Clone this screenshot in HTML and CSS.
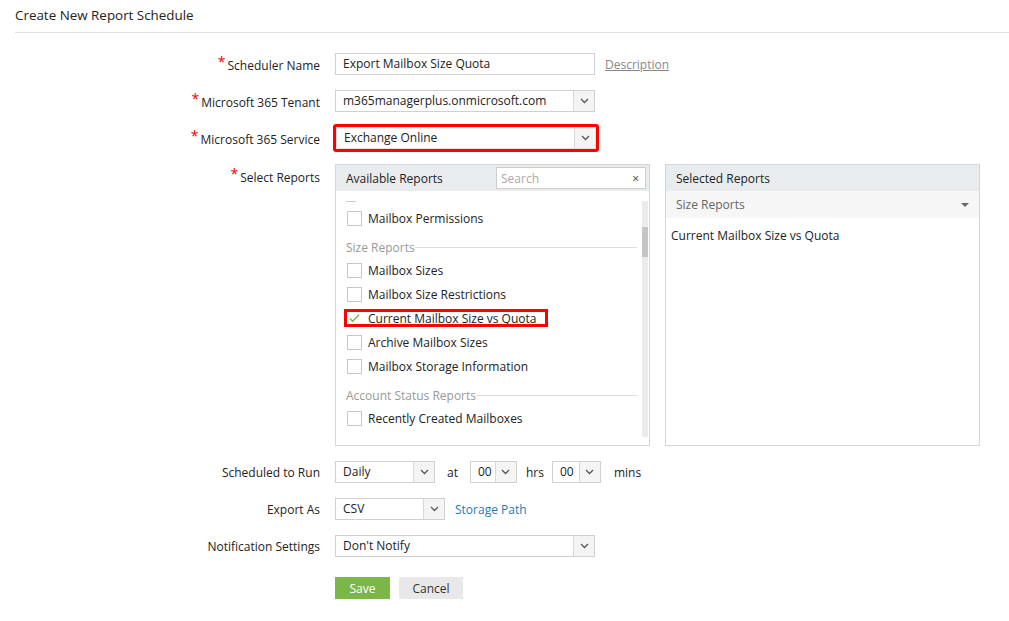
FILE: index.html
```html
<!DOCTYPE html>
<html lang="en">
<head>
    <meta charset="UTF-8">
    <title>Create New Report Schedule</title>
    <link rel="stylesheet" href="styles.css">
</head>
<body>
<header class="page-head">
    <h1>Create New Report Schedule</h1>
</header>

<form class="form">
    <!-- NAME -->
    <div class="row">
        <label class="lbl"><span class="req">*</span>Scheduler Name</label>
        <div class="field">
            <div class="input w260">Export Mailbox Size Quota</div>
            <a class="desc">Description</a>
        </div>
    </div>

    <div class="row">
        <label class="lbl"><span class="req">*</span>Microsoft 365 Tenant</label>
        <div class="field">
            <div class="select w260"><span class="val">m365managerplus.onmicrosoft.com</span><span class="arrow"><svg width="9" height="6" viewBox="0 0 9 6"><path d="M1 1l3.5 3.5L8 1" fill="none" stroke="#555" stroke-width="1.3"/></svg></span></div>
        </div>
    </div>

    <div class="row">
        <label class="lbl"><span class="req">*</span>Microsoft 365 Service</label>
        <div class="field">
            <div class="hl">
                <div class="select w260"><span class="val">Exchange Online</span><span class="arrow"><svg width="9" height="6" viewBox="0 0 9 6"><path d="M1 1l3.5 3.5L8 1" fill="none" stroke="#555" stroke-width="1.3"/></svg></span></div>
            </div>
        </div>
    </div>

    <!-- REPORTS -->
    <div class="row top">
        <label class="lbl pt"><span class="req">*</span>Select Reports</label>
        <div class="field panels">
            <div class="panel">
                <div class="panel-head">
                    <span>Available Reports</span>
                    <div class="search"><span class="ph">Search</span><span class="x">×</span></div>
                </div>
                <div class="list-wrap">
                    <ul class="list">
                        <li class="stub"></li>
                        <li class="item"><span class="cb"></span>Mailbox Permissions</li>
                        <li class="group"><span>Size Reports</span></li>
                        <li class="item"><span class="cb"></span>Mailbox Sizes</li>
                        <li class="item"><span class="cb"></span>Mailbox Size Restrictions</li>
                        <li class="item checked"><span class="cb"><svg width="14" height="14" viewBox="0 0 14 14"><path d="M2 7.5l3 3L12 3.5" fill="none" stroke="#7ab648" stroke-width="1.4"/></svg></span>Current Mailbox Size vs Quota</li>
                        <li class="item"><span class="cb"></span>Archive Mailbox Sizes</li>
                        <li class="item"><span class="cb"></span>Mailbox Storage Information</li>
                        <li class="group"><span>Account Status Reports</span></li>
                        <li class="item"><span class="cb"></span>Recently Created Mailboxes</li>
                    </ul>
                    <div class="scroll"><div class="thumb"></div></div>
                </div>
            </div>
            <div class="panel">
                <div class="panel-head">Selected Reports</div>
                <div class="sub-head"><span>Size Reports</span><span class="caret"></span></div>
                <div class="sel-item">Current Mailbox Size vs Quota</div>
            </div>
        </div>
    </div>

    <!-- SCHEDULE -->
    <div class="row">
        <label class="lbl">Scheduled to Run</label>
        <div class="field">
            <div class="select w100"><span class="val">Daily</span><span class="arrow"><svg width="9" height="6" viewBox="0 0 9 6"><path d="M1 1l3.5 3.5L8 1" fill="none" stroke="#555" stroke-width="1.3"/></svg></span></div>
            <span class="txt">at</span>
            <div class="select w47"><span class="val">00</span><span class="arrow"><svg width="9" height="6" viewBox="0 0 9 6"><path d="M1 1l3.5 3.5L8 1" fill="none" stroke="#555" stroke-width="1.3"/></svg></span></div>
            <span class="txt hrs">hrs</span>
            <div class="select w49"><span class="val">00</span><span class="arrow"><svg width="9" height="6" viewBox="0 0 9 6"><path d="M1 1l3.5 3.5L8 1" fill="none" stroke="#555" stroke-width="1.3"/></svg></span></div>
            <span class="txt mins">mins</span>
        </div>
    </div>

    <div class="row">
        <label class="lbl">Export As</label>
        <div class="field">
            <div class="select w110"><span class="val">CSV</span><span class="arrow"><svg width="9" height="6" viewBox="0 0 9 6"><path d="M1 1l3.5 3.5L8 1" fill="none" stroke="#555" stroke-width="1.3"/></svg></span></div>
            <a class="link">Storage Path</a>
        </div>
    </div>

    <div class="row">
        <label class="lbl">Notification Settings</label>
        <div class="field">
            <div class="select w260"><span class="val">Don't Notify</span><span class="arrow"><svg width="9" height="6" viewBox="0 0 9 6"><path d="M1 1l3.5 3.5L8 1" fill="none" stroke="#555" stroke-width="1.3"/></svg></span></div>
        </div>
    </div>

    <div class="row actions">
        <span class="lbl"></span>
        <div class="field">
            <button type="button" class="btn save">Save</button>
            <button type="button" class="btn cancel">Cancel</button>
        </div>
    </div>
</form>
</body>
</html>
```

FILE: styles.css
```css
html {
    box-sizing: border-box;
    background: #fff;
}

*, *:before, *:after {
    box-sizing: inherit;
}

body {
    margin: 0;
    font-family: 'Open Sans', sans-serif;
    font-size: 12px;
    color: #222;
}

.page-head {
    margin-left: 15px;
    border-bottom: solid 1px #e2e2e2;
    height: 33px;
}

h1 {
    margin: 0;
    padding-top: 6px;
    font-size: 13.4px;
    font-weight: normal;
    color: #222;
    line-height: 18px;
}

.form {
    display: flex;
    flex-direction: column;
    gap: 15px;
    padding-top: 20px;
}

.row {
    display: flex;
    align-items: center;
    gap: 15px;
}

.row.top {
    align-items: flex-start;
}

.row.actions {
    margin-top: 5px;
}

.lbl {
    width: 320px;
    text-align: right;
    flex: none;
}

.lbl.pt {
    padding-top: 3px;
}

.req {
    color: #e00;
    font-size: 14px;
    position: relative;
    top: -3px;
    margin-right: 2px;
}

.field {
    display: flex;
    align-items: center;
}

.input, .select {
    height: 22px;
    border: solid 1px #d0d0d0;
    background: #fff;
    display: flex;
    align-items: center;
    line-height: 20px;
}

.input {
    padding: 0 7px;
}

.select .val {
    flex: 1;
    padding-left: 7px;
    white-space: nowrap;
    overflow: hidden;
}

.select .arrow {
    width: 21px;
    height: 100%;
    border-left: solid 1px #d8d8d8;
    background: #f4f4f4;
    display: flex;
    align-items: center;
    justify-content: center;
}

.w260 { width: 260px; }
.w100 { width: 100px; }
.w47 { width: 47px; }
.w49 { width: 49px; }
.w110 { width: 110px; }

.desc {
    margin-left: 10px;
    color: #888;
    text-decoration: underline;
}

.hl {
    border: solid 3px #f00;
    border-radius: 3px;
    margin: -3px -2px;
    height: 28px;
}

.hl .select {
    height: 22px;
    border-color: #e0e0e0;
}

.txt {
    margin: 0 12px;
}

.txt.hrs {
    margin: 0 8px 0 9px;
}

.txt.mins {
    margin-left: 13px;
}

.link {
    margin-left: 10px;
    color: #1a7db5;
}

/* REPORT PANELS */

.panels {
    align-items: flex-start;
    gap: 15px;
}

.panel {
    width: 315px;
    height: 282px;
    border: solid 1px #d6d6d6;
    background: #fff;
}

.panel-head {
    height: 26px;
    background: #e9ecee;
    display: flex;
    align-items: center;
    justify-content: space-between;
    padding: 0 3px 0 10px;
}

.search {
    width: 150px;
    height: 22px;
    border: solid 1px #ccc;
    background: #fff;
    display: flex;
    align-items: center;
    justify-content: space-between;
    padding: 0 6px 0 4px;
}

.search .ph {
    color: #aaa;
}

.search .x {
    color: #444;
    font-size: 12px;
}

.list-wrap {
    position: relative;
    height: 254px;
}

.list {
    list-style: none;
    margin: 0;
    padding: 0 12px 0 10px;
}

.stub {
    height: 11px;
    width: 10px;
    border-bottom: solid 1px #ccc;
}

.item {
    height: 24px;
    display: flex;
    align-items: center;
    padding-left: 1px;
}

.list .item:nth-child(2) {
    margin-top: 4px;
}

.cb {
    width: 15px;
    height: 15px;
    border: solid 1px #c8c8c8;
    margin-right: 6px;
    display: flex;
    align-items: center;
    justify-content: center;
}

.checked {
    outline: solid 3px #f00;
    outline-offset: -6px;
    border-radius: 3px;
    width: 210px;
    margin-left: -5px;
    padding-left: 6px;
}

.checked .cb {
    border-color: transparent;
}

.group {
    height: 28px;
    display: flex;
    align-items: center;
    color: #999;
    padding-top: 6px;
}

.group:after {
    content: "";
    flex: 1;
    border-top: solid 1px #ddd;
}

.scroll {
    position: absolute;
    right: 1px;
    top: 10px;
    width: 6px;
    height: 236px;
    background: #ebebeb;
}

.thumb {
    margin-top: 26px;
    height: 30px;
    background: #c6c6c6;
}

.sub-head {
    height: 27px;
    background: #f6f6f6;
    color: #666;
    display: flex;
    align-items: center;
    justify-content: space-between;
    padding: 0 10px;
}

.caret {
    width: 0;
    height: 0;
    border-left: solid 4px transparent;
    border-right: solid 4px transparent;
    border-top: solid 4px #666;
}

.sel-item {
    padding: 9px 5px;
}

/* BUTTONS */

.btn {
    font-family: 'Open Sans', sans-serif;
    font-size: 12px;
    height: 22px;
    border: none;
    padding: 0;
    cursor: pointer;
}

.save {
    width: 55px;
    background: #7ab648;
    color: #fff;
}

.cancel {
    width: 64px;
    margin-left: 9px;
    background: #e8e8e8;
    color: #333;
}
```
